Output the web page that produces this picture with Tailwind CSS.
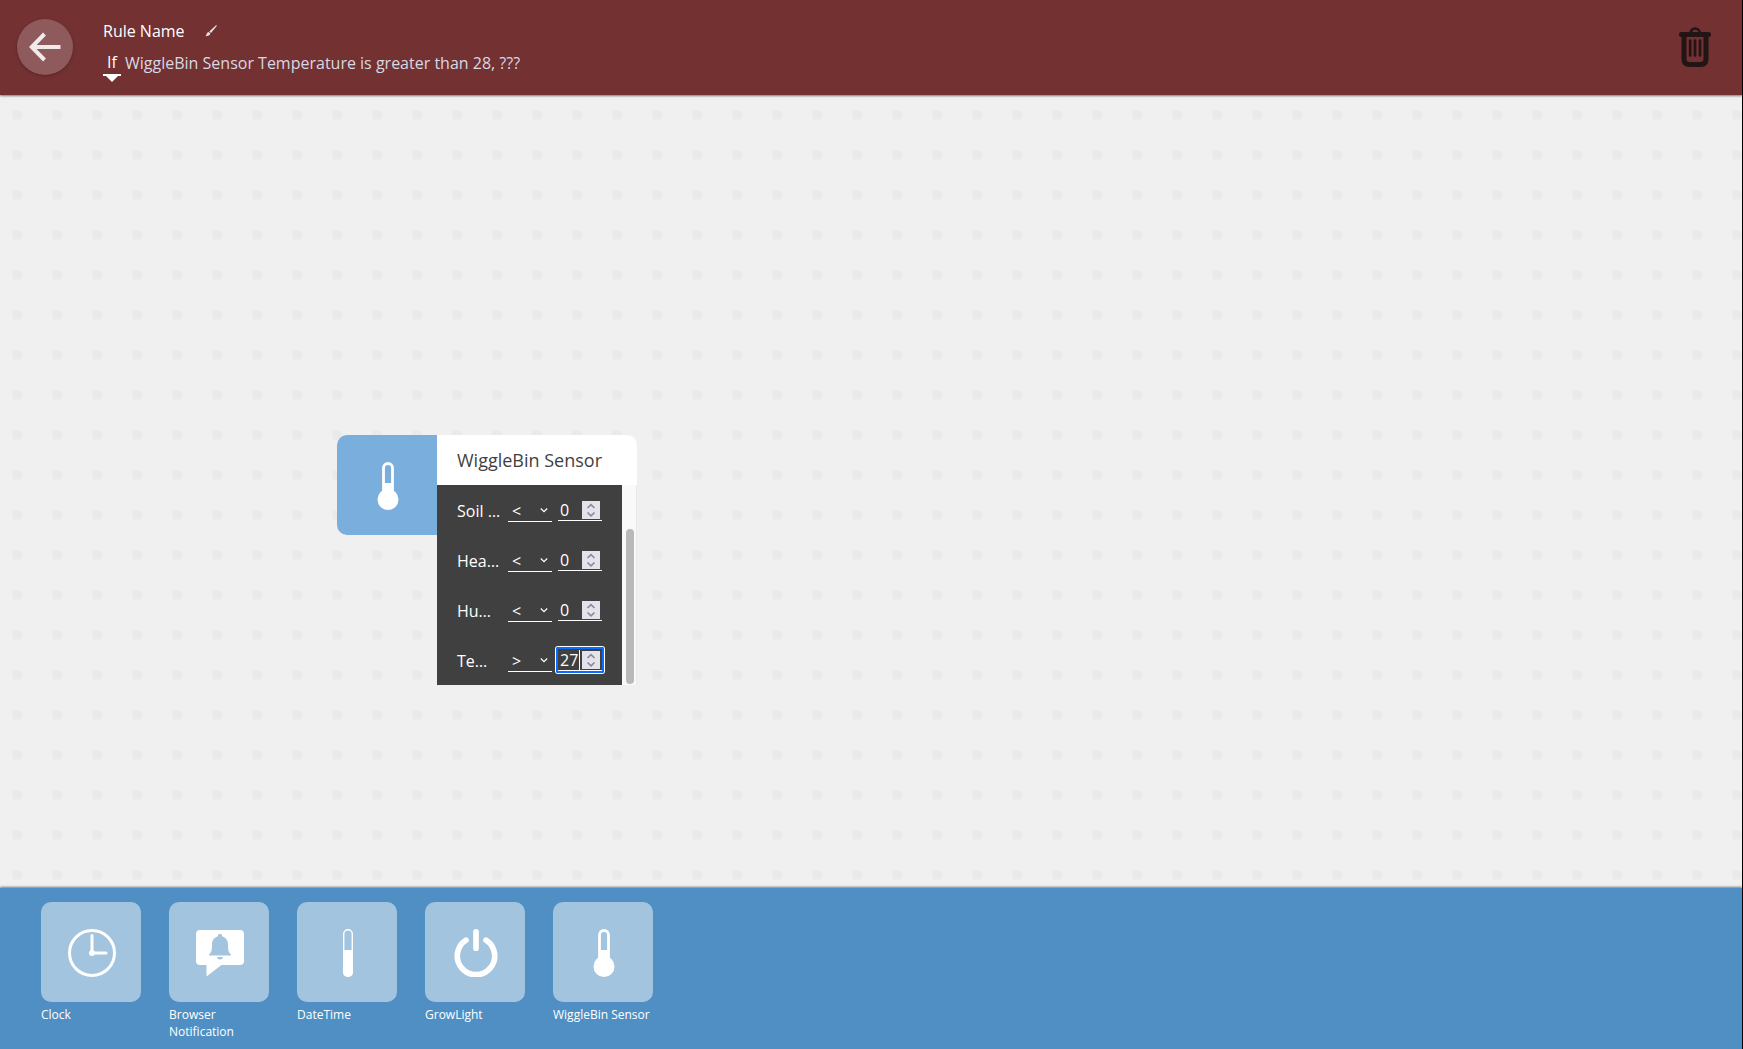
<!DOCTYPE html>
<html lang="en">
<head>
<meta charset="utf-8">
<meta name="viewport" content="width=device-width, initial-scale=1">
<title>Rule editor</title>
<script src="https://cdn.jsdelivr.net/npm/@tailwindcss/browser@4"></script>
</head>
<body class="flex h-screen flex-col overflow-hidden border-r border-black bg-[#f0f0f0] font-['Open_Sans',sans-serif] text-base text-white">

<header class="z-10 flex h-[95px] shrink-0 items-center bg-[#733132] pr-[31px] pb-[2px] pl-[17px] shadow-[0_1px_2px_rgba(0,0,0,0.5)]">
  <button type="button" aria-label="Back" class="flex size-14 items-center justify-center rounded-full bg-white/20 shadow-[0_1px_3px_rgba(0,0,0,0.25)]">
    <svg class="size-8" viewBox="0 0 32 32" fill="none" stroke="#f1eaea" stroke-width="4"><path d="M15.500 3 2.800 16l12.700 13M3 16h28.500"/></svg>
  </button>
  <div class="ml-[30px] flex flex-1 flex-col gap-2">
    <div class="flex h-6 items-center gap-5">
      <h1>Rule Name</h1>
      <button type="button" aria-label="Edit rule name">
        <svg class="size-3" viewBox="0 0 12 12"><path d="M11.300.2c.6 0 .7.5.4.9L6 7.900 4.300 6.400 10.700.5zM3.700 6.900 5.400 8.400C5 10.200 3.200 11.200.3 11.200c1-.8 1-1.400 1.400-2.500.4-1 1.100-1.600 2-1.800z" fill="#e6dfe4"/></svg>
      </button>
    </div>
    <p class="flex h-6 items-center gap-1 text-[#d6d9e3]">
      <span class="relative flex w-[18px] justify-center border-b-2 border-white text-white">If
        <svg class="absolute top-full left-px h-2 w-4" viewBox="0 0 16 8"><path d="M0 0h16L8 8z" fill="#fff"/></svg>
      </span>
      <span>WiggleBin Sensor Temperature is greater than 28, ???</span>
    </p>
  </div>
  <button type="button" aria-label="Delete rule">
    <svg class="h-10 w-8" viewBox="0 0 32 40" fill="none" stroke="#231416" stroke-linecap="round"><path d="M11.500 6.500C11.500 3.500 13.500 1.500 16 1.500s5 2 5 5" stroke-width="2.600"/><path d="M2.500 7.500h27" stroke-width="5"/><path d="M5 8v24q0 5.500 5.500 5.500h11q5.500 0 5.500-5.500V8" stroke-width="5"/><path d="M11.200 13.500v15M16 13.500v15M21 13.500v15" stroke-width="2.700"/></svg>
  </button>
</header>

<main class="relative flex-1 bg-[radial-gradient(circle,#eaeaea_5px,transparent_5.500px)] bg-[size:40px_40px] bg-[position:-3px_0px]">
  <section class="absolute top-[340px] left-[337px] flex w-[300px] items-start">
    <div class="flex size-[100px] shrink-0 items-center justify-center rounded-l-[10px] bg-[#79aedd] pt-[2px] pl-[2px]">
      <svg class="h-12 w-6" viewBox="0 0 24 48"><path d="M7.500 33V6a4.500 4.500 0 0 1 9 0v27" fill="none" stroke="#fff" stroke-width="2.800"/><path d="M7 21h10v12H7z" fill="#fff"/><circle cx="12" cy="37.500" r="10.500" fill="#fff"/></svg>
    </div>
    <div class="flex-1">
      <h2 class="flex h-[50px] items-center rounded-tr-[10px] bg-white pl-5 text-lg text-[#3f3f3f]">WiggleBin Sensor</h2>
      <div class="flex h-[200px] bg-[#f9f9f9]">
        <div class="w-[185px] bg-[#404040] pl-5">
          <div class="flex h-[50px] items-center">
            <label for="soil" title="Soil Moisture" class="mr-2 w-[43px] pt-[2px] whitespace-nowrap">Soil …</label>
            <div class="relative mr-[6px]">
              <select aria-label="Soil comparison" class="block h-6 w-11 appearance-none border-b border-white pt-px pl-1 outline-none"><option>&lt;</option><option>&gt;</option></select>
              <svg class="pointer-events-none absolute top-2 right-1 h-2 w-2" viewBox="0 0 8 8" fill="none" stroke="#fff" stroke-width="1.200"><path d="m.8 2.500 3.200 3.200 3.200-3.200"/></svg>
            </div>
            <div class="relative">
              <input id="soil" type="number" value="0" class="block h-[22px] w-11 [appearance:textfield] border-b border-white pl-[2px] outline-none">
              <svg class="absolute top-[2px] right-[2px] size-[18px] bg-[#e4e3eb]" viewBox="0 0 18 18" fill="none" stroke="#8b8a99" stroke-width="1.700"><path d="m5.500 7 3.500-3.300L12.500 7M5.500 11.500 9 14.800l3.500-3.300"/></svg>
            </div>
          </div>
          <div class="flex h-[50px] items-center">
            <label for="heat" title="Heat Index" class="mr-2 w-[43px] pt-[2px] whitespace-nowrap">Hea…</label>
            <div class="relative mr-[6px]">
              <select aria-label="Heat comparison" class="block h-6 w-11 appearance-none border-b border-white pt-px pl-1 outline-none"><option>&lt;</option><option>&gt;</option></select>
              <svg class="pointer-events-none absolute top-2 right-1 h-2 w-2" viewBox="0 0 8 8" fill="none" stroke="#fff" stroke-width="1.200"><path d="m.8 2.500 3.200 3.200 3.200-3.200"/></svg>
            </div>
            <div class="relative">
              <input id="heat" type="number" value="0" class="block h-[22px] w-11 [appearance:textfield] border-b border-white pl-[2px] outline-none">
              <svg class="absolute top-[2px] right-[2px] size-[18px] bg-[#e4e3eb]" viewBox="0 0 18 18" fill="none" stroke="#8b8a99" stroke-width="1.700"><path d="m5.500 7 3.500-3.300L12.500 7M5.500 11.500 9 14.800l3.500-3.300"/></svg>
            </div>
          </div>
          <div class="flex h-[50px] items-center">
            <label for="humidity" title="Humidity" class="mr-2 w-[43px] pt-[2px] whitespace-nowrap">Hu…</label>
            <div class="relative mr-[6px]">
              <select aria-label="Humidity comparison" class="block h-6 w-11 appearance-none border-b border-white pt-px pl-1 outline-none"><option>&lt;</option><option>&gt;</option></select>
              <svg class="pointer-events-none absolute top-2 right-1 h-2 w-2" viewBox="0 0 8 8" fill="none" stroke="#fff" stroke-width="1.200"><path d="m.8 2.500 3.200 3.200 3.200-3.200"/></svg>
            </div>
            <div class="relative">
              <input id="humidity" type="number" value="0" class="block h-[22px] w-11 [appearance:textfield] border-b border-white pl-[2px] outline-none">
              <svg class="absolute top-[2px] right-[2px] size-[18px] bg-[#e4e3eb]" viewBox="0 0 18 18" fill="none" stroke="#8b8a99" stroke-width="1.700"><path d="m5.500 7 3.500-3.300L12.500 7M5.500 11.500 9 14.800l3.500-3.300"/></svg>
            </div>
          </div>
          <div class="flex h-[50px] items-center">
            <label for="temperature" title="Temperature" class="mr-2 w-[43px] pt-[2px] whitespace-nowrap">Te…</label>
            <div class="relative mr-[6px]">
              <select aria-label="Temperature comparison" class="block h-6 w-11 appearance-none border-b border-white pt-px pl-1 outline-none"><option>&gt;</option><option>&lt;</option></select>
              <svg class="pointer-events-none absolute top-2 right-1 h-2 w-2" viewBox="0 0 8 8" fill="none" stroke="#fff" stroke-width="1.200"><path d="m.8 2.500 3.200 3.200 3.200-3.200"/></svg>
            </div>
            <div class="relative">
              <div class="pointer-events-none absolute -inset-[2px] rounded-[2px] ring-1 ring-white outline-2 -outline-offset-2 outline-[#0a6cff]"></div>
              <input id="temperature" type="number" value="27" class="block h-[22px] w-11 [appearance:textfield] border-b border-white pl-[2px] outline-none">
              <span class="absolute top-[1px] left-[21px] h-5 w-px bg-white"></span>
              <svg class="absolute top-[2px] right-[2px] size-[18px] bg-[#e4e3eb]" viewBox="0 0 18 18" fill="none" stroke="#8b8a99" stroke-width="1.700"><path d="m5.500 7 3.500-3.300L12.500 7M5.500 11.500 9 14.800l3.500-3.300"/></svg>
            </div>
          </div>
        </div>
        <div class="flex flex-1 flex-col justify-end border-r border-[#e9e9e9] pb-px pl-1">
          <div class="h-[155px] w-2 rounded-full bg-[#b9b9b9]"></div>
        </div>
      </div>
    </div>
  </section>
</main>

<footer class="z-10 flex h-[161px] shrink-0 gap-7 bg-[#4f8fc3] pt-[14px] pl-[41px] text-xs leading-[17px] shadow-[0_-1px_2px_rgba(0,0,0,0.5)]">
  <button type="button" class="flex w-[100px] flex-col gap-1 text-left">
    <span class="flex h-[100px] w-full items-center justify-center rounded-[10px] bg-[#a2c4df] pt-[2px] pl-[2px]">
      <svg class="size-12" viewBox="0 0 48 48" fill="none" stroke="#fff" stroke-linecap="round"><circle cx="24" cy="24" r="22.500" stroke-width="3"/><path d="M24 6.500V24h14" stroke-width="3"/><circle cx="24" cy="24" r="3" fill="#fff" stroke="none"/></svg>
    </span>
    <span>Clock</span>
  </button>
  <button type="button" class="flex w-[100px] flex-col gap-1 text-left">
    <span class="flex h-[100px] w-full items-center justify-center rounded-[10px] bg-[#a2c4df] pt-[2px] pl-[2px]">
      <svg class="size-12" viewBox="0 0 48 48" fill="#fff"><path d="M4 1h40a4 4 0 0 1 4 4v27a4 4 0 0 1-4 4H25.500L10.500 47.500V36H4a4 4 0 0 1-4-4V5a4 4 0 0 1 4-4z"/><path d="M24 5a2 2 0 0 1 2 2.300c3.800 1 6 4.200 6 8.200 0 5.500.5 8 2.800 9.500V26.500H13.200V25c2.300-1.500 2.800-4 2.800-9.500 0-4 2.200-7.200 6-8.200A2 2 0 0 1 24 5zM21.200 28h5.600a2.800 2.500 0 0 1-5.600 0z" fill="#a2c4df"/></svg>
    </span>
    <span>Browser Notification</span>
  </button>
  <button type="button" class="flex w-[100px] flex-col gap-1 text-left">
    <span class="flex h-[100px] w-full items-center justify-center rounded-[10px] bg-[#a2c4df] pt-[2px] pl-[2px]">
      <svg class="size-12" viewBox="0 0 48 48"><rect x="19.700" y=".7" width="8.600" height="46.600" rx="4.300" fill="none" stroke="#fff" stroke-width="1.400"/><path d="M19 21h10v22a5 5 0 0 1-10 0z" fill="#fff"/></svg>
    </span>
    <span>DateTime</span>
  </button>
  <button type="button" class="flex w-[100px] flex-col gap-1 text-left">
    <span class="flex h-[100px] w-full items-center justify-center rounded-[10px] bg-[#a2c4df] pt-[2px] pl-[2px]">
      <svg class="size-12" viewBox="0 0 48 48" fill="none" stroke="#fff" stroke-width="5.700" stroke-linecap="round"><path d="M24 2.900v16.300M14 11.200a18.700 18.700 0 1 0 20 0"/></svg>
    </span>
    <span>GrowLight</span>
  </button>
  <button type="button" class="flex w-[100px] flex-col gap-1 text-left">
    <span class="flex h-[100px] w-full items-center justify-center rounded-[10px] bg-[#a2c4df] pt-[2px] pl-[2px]">
      <svg class="h-12 w-6" viewBox="0 0 24 48"><path d="M7.500 33V6a4.500 4.500 0 0 1 9 0v27" fill="none" stroke="#fff" stroke-width="2.800"/><path d="M7 21h10v12H7z" fill="#fff"/><circle cx="12" cy="37.500" r="10.500" fill="#fff"/></svg>
    </span>
    <span>WiggleBin Sensor</span>
  </button>
</footer>
</body>
</html>
